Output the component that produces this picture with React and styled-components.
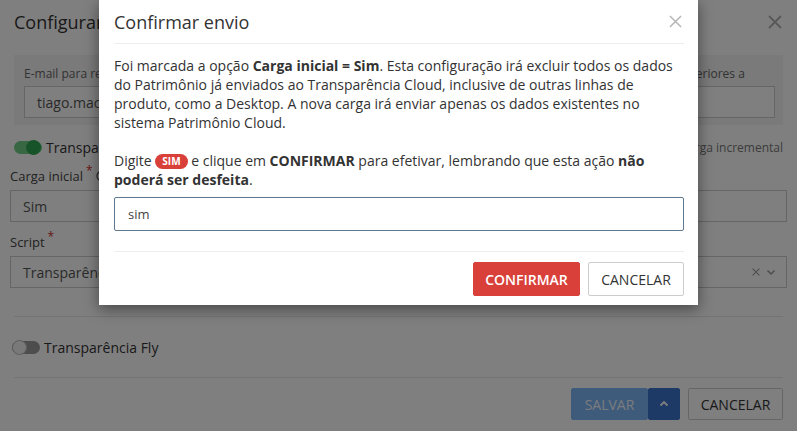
import React from 'react'
import styled, { createGlobalStyle } from 'styled-components'

const GlobalStyle = createGlobalStyle`
  * { box-sizing: border-box; }
  body {
    margin: 0;
    font-family: "Open Sans", "Liberation Sans", sans-serif;
    color: #333;
    background: #fff;
  }
`

const Page = styled.div`
  position: relative;
  width: 797px;
  height: 431px;
  overflow: hidden;
  background: #fff;
`

const Header = styled.div`
  height: 44px;
  padding: 0 14px;
  display: flex;
  align-items: center;
  justify-content: space-between;
`
const PageTitle = styled.h1`
  margin: 0;
  font-size: 18px;
  font-weight: 400;
  color: #333;
`

const CloseBtn = styled.button`
  border: 0;
  background: none;
  padding: 0;
  width: 16px;
  height: 16px;
  display: flex;
  align-items: center;
  justify-content: center;
  color: ${(props) => props.color || '#aaa'};
  cursor: pointer;
`

const GrayBox = styled.div`
  margin: 11px 14px 0;
  height: 70px;
  padding: 11px 8px 0 10px;
  background: #f4f4f4;
  display: grid;
  grid-template-columns: 1fr 1fr;
  gap: 20px;
`
const SmallLabel = styled.div`
  font-size: 12px;
  line-height: 16px;
  color: #666;
  white-space: nowrap;
  margin-bottom: 4px;
`
const Input = styled.div`
  height: 32px;
  border: 1px solid #ccc;
  background: #fff;
  padding: 0 12px;
  font-size: 14px;
  display: flex;
  align-items: center;
  color: #555;
`

const ToggleRow = styled.div`
  margin-top: ${(props) => props.top || 0}px;
  padding: 0 14px 0 ${(props) => props.left || 14}px;
  height: 20px;
  display: flex;
  align-items: center;
  justify-content: space-between;
`
const SwitchWrap = styled.div`
  display: flex;
  align-items: center;
  gap: 4px;
  font-size: 14px;
  color: #333;
`
const Track = styled.span`
  position: relative;
  width: 28px;
  height: 13px;
  border-radius: 7px;
  background: ${(props) => (props.on ? '#6fcf87' : '#9a9a9a')};
`
const Knob = styled.span`
  position: absolute;
  top: -1px;
  left: ${(props) => (props.on ? '12px' : '0')};
  width: 15px;
  height: 15px;
  border-radius: 50%;
  background: ${(props) => (props.on ? '#2ea651' : '#f2f2f2')};
  border: 1px solid ${(props) => (props.on ? '#2ea651' : '#bbb')};
`
const SideNote = styled.span`
  font-size: 12px;
  color: #777;
`

const FieldGrid = styled.div`
  margin-top: 10px;
  padding: 0 10px;
  display: grid;
  grid-template-columns: 1fr 1fr;
  gap: 20px;
`
const FieldFull = styled.div`
  margin-top: 11px;
  padding: 0 10px;
`
const Label = styled.div`
  font-size: 13px;
  line-height: 18px;
  margin-bottom: 5px;
  color: #444;
  display: flex;
  align-items: center;
  gap: 3px;
  span {
    color: #c9302c;
    font-size: 12px;
    align-self: flex-start;
    line-height: 12px;
    margin-top: -2px;
  }
`
const Select = styled(Input)`
  justify-content: space-between;
  padding-right: 10px;
`
const SelectIcons = styled.div`
  display: flex;
  align-items: center;
  gap: 6px;
  color: #999;
  font-size: 13px;
`

const Separator = styled.hr`
  margin: ${(props) => props.top}px 14px 0;
  border: 0;
  border-top: 1px solid #e8e8e8;
`

const Footer = styled.div`
  margin-top: 10px;
  padding: 0 14px;
  display: flex;
  justify-content: flex-end;
  gap: 8px;
`
const Split = styled.div`
  display: flex;
`
const Btn = styled.button`
  height: ${(props) => props.h || 32}px;
  padding: 0 ${(props) => props.pad || 12}px;
  font-family: inherit;
  font-size: 14px;
  font-weight: ${(props) => (props.bold ? 600 : 400)};
  text-transform: uppercase;
  border: 1px solid ${(props) => props.border || props.bg || '#ccc'};
  background: ${(props) => props.bg || '#fff'};
  color: ${(props) => props.fg || '#333'};
  border-radius: 2px;
  display: flex;
  align-items: center;
  justify-content: center;
  cursor: pointer;
`

const Overlay = styled.div`
  position: absolute;
  inset: 0;
  background: rgba(0, 0, 0, 0.5);
`

const Modal = styled.div`
  position: absolute;
  left: 99px;
  top: 0;
  width: 599px;
  padding: 0 14px 0 15px;
  background: #fff;
  box-shadow: 0 4px 14px rgba(0, 0, 0, 0.45);
`
const ModalHeader = styled.div`
  height: 44px;
  display: flex;
  align-items: center;
  justify-content: space-between;
  border-bottom: 1px solid #eee;
  padding-right: 1px;
`
const ModalTitle = styled.h2`
  margin: 0;
  font-size: 18px;
  font-weight: 400;
  color: #333;
`
const ModalBody = styled.div`
  padding: 12px 0 20px;
  font-size: 14px;
  line-height: 19px;
  color: #333;
  p { margin: 0 0 19px; }
  b { font-weight: 700; }
`
const Badge = styled.span`
  display: inline-block;
  vertical-align: 1px;
  margin: -4px 0;
  padding: 0 7px;
  height: 15px;
  line-height: 15px;
  border-radius: 8px;
  background: #d9403a;
  color: #fff;
  font-size: 10px;
  font-weight: 700;
`
const TextBox = styled.input`
  display: block;
  width: 100%;
  height: 34px;
  margin-top: -11px;
  padding: 0 13px;
  font-family: inherit;
  font-size: 13px;
  color: #444;
  border: 1px solid #5d7890;
  border-radius: 2px;
  outline: none;
`
const ModalFooter = styled.div`
  border-top: 1px solid #eee;
  padding: 10px 0 9px;
  display: flex;
  justify-content: flex-end;
  gap: 8px;
`

const XIcon = ({ size = 14, weight = 1.8 }) => (
  <svg width={size} height={size} viewBox="0 0 14 14">
    <path d="M1 1L13 13M13 1L1 13" stroke="currentColor" strokeWidth={weight} fill="none" />
  </svg>
)

const Switch = ({ on, children }) => (
  <SwitchWrap>
    <Track on={on ? 1 : 0}>
      <Knob on={on ? 1 : 0} />
    </Track>
    {children}
  </SwitchWrap>
)

const App = () => {
  return (
    <Page>
      <GlobalStyle />
      <Header>
        <PageTitle>Configurar integração</PageTitle>
        <CloseBtn color="#b0b0b0"><XIcon size={14} /></CloseBtn>
      </Header>
      <GrayBox>
        <div>
          <SmallLabel>E-mail para receber notificações</SmallLabel>
          <Input>tiago.macedo@empresa.com.br</Input>
        </div>
        <div>
          <SmallLabel>Enviar somente os registros com as alterações posteriores a</SmallLabel>
          <Input />
        </div>
      </GrayBox>
      <ToggleRow top={12}>
        <Switch on>Transparência Cloud</Switch>
        <SideNote>Última carga incremental</SideNote>
      </ToggleRow>
      <FieldGrid>
        <div>
          <Label>Carga inicial <span>*</span>
            <svg width="12" height="12" viewBox="0 0 12 12">
              <circle cx="6" cy="6" r="5" stroke="#555" strokeWidth="1.3" fill="none" />
            </svg>
          </Label>
          <Input>Sim</Input>
        </div>
        <div>
          <Label>Data da carga</Label>
          <Input />
        </div>
      </FieldGrid>
      <FieldFull>
        <Label>Script <span>*</span></Label>
        <Select>
          Transparência Cloud
          <SelectIcons>
            <XIcon size={8} />
            <svg width="10" height="10" viewBox="0 0 10 10">
              <path d="M1.5 3.5L5 7L8.5 3.5" stroke="currentColor" strokeWidth="1.5" fill="none" />
            </svg>
          </SelectIcons>
        </Select>
      </FieldFull>
      <Separator top={28} />
      <ToggleRow top={20} left={12}>
        <Switch>Transparência Fly</Switch>
      </ToggleRow>
      <Separator top={20} />
      <Footer>
        <Split>
          <Btn bg="#7cb6f6" fg="#f4f8ff" pad={13} style={{ width: 77 }}>Salvar</Btn>
          <Btn bg="#3a72cc" fg="#fff" style={{ width: 32, padding: 0 }}>
            <svg width="10" height="10" viewBox="0 0 10 10">
              <path d="M1.5 6.5L5 3L8.5 6.5" stroke="currentColor" strokeWidth="1.8" fill="none" />
            </svg>
          </Btn>
        </Split>
        <Btn style={{ width: 95 }}>Cancelar</Btn>
      </Footer>

      <Overlay />
      <Modal>
        <ModalHeader>
          <ModalTitle>Confirmar envio</ModalTitle>
          <CloseBtn color="#b5b5b5"><XIcon size={13} weight={1.6} /></CloseBtn>
        </ModalHeader>
        <ModalBody>
          <p>
            Foi marcada a opção <b>Carga inicial = Sim</b>. Esta configuração irá excluir todos os dados
            do Patrimônio já enviados ao Transparência Cloud, inclusive de outras linhas de produto,
            como a Desktop. A nova carga irá enviar apenas os dados existentes no sistema Patrimônio Cloud.
          </p>
          <p>
            Digite <Badge>SIM</Badge> e clique em <b>CONFIRMAR</b> para efetivar, lembrando que esta ação{' '}
            <b>não poderá ser desfeita</b>.
          </p>
          <TextBox defaultValue="sim" />
        </ModalBody>
        <ModalFooter>
          <Btn bold h={34} bg="#d9403a" fg="#fff" style={{ width: 107 }}>Confirmar</Btn>
          <Btn h={34} style={{ width: 96 }}>Cancelar</Btn>
        </ModalFooter>
      </Modal>
    </Page>
  )
}

export default App
